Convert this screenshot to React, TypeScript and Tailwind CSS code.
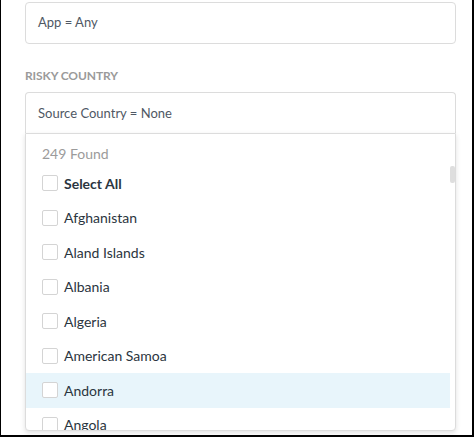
const countries = [
  "Afghanistan",
  "Aland Islands",
  "Albania",
  "Algeria",
  "American Samoa",
  "Andorra",
  "Angola",
];

function Checkbox() {
  return <span className="w-4 h-4 shrink-0 rounded-[2px] border border-[#d4d4d4] bg-white" />;
}

export default function App() {
  return (
    <div
      className="w-[474px] h-[437px] overflow-hidden bg-white border-l border-r-2 border-b-2 border-black"
      style={{ fontFamily: "Lato, 'Open Sans', sans-serif" }}
    >
      <div className="pl-6 pr-4 pt-[2px]">
        <div className="h-[42px] flex items-center px-3 border border-[#dcdcdc] rounded text-[13px] text-[#4f5864]">
          App = Any
        </div>

        <div className="mt-[24px] mb-2 h-4 text-[12px] font-bold text-[#9a9a9a] tracking-[-0.1px] leading-4">
          RISKY COUNTRY
        </div>

        <div className="h-[41px] flex items-center px-3 pt-[1px] border border-b-0 border-[#dcdcdc] rounded-t text-[13px] text-[#4f5864]">
          Source Country = None
        </div>

        <div className="h-[298px] border border-[#dcdcdc] rounded-b shadow-[0_2px_5px_rgba(0,0,0,0.12)] bg-white flex flex-col overflow-hidden">
          <div className="pt-[10px] pl-4 h-[32px] text-[14px] leading-5 text-[#9b9b9b]">249 Found</div>
          <div className="flex flex-1 min-h-0">
            <div className="flex-1 overflow-hidden">
              <div className="h-[34.5px] flex items-center gap-[6px] pl-4">
                <Checkbox />
                <span className="text-[14px] font-bold text-[#2b3540]">Select All</span>
              </div>
              {countries.map((c) => (
                <div
                  key={c}
                  className={`h-[34.5px] flex items-center gap-[6px] pl-4 ${c === "Andorra" ? "bg-[#e8f5fb]" : ""}`}
                >
                  <Checkbox />
                  <span className="text-[14px] text-[#2b3540]">{c}</span>
                </div>
              ))}
            </div>
            <div className="w-[5px]">
              <div className="h-[17px] rounded-[2px] bg-[#dedede]" />
            </div>
          </div>
        </div>

        <div className="mt-[3px] text-[12px] font-bold text-[#9a9a9a]">STATUS</div>
      </div>
    </div>
  );
}
